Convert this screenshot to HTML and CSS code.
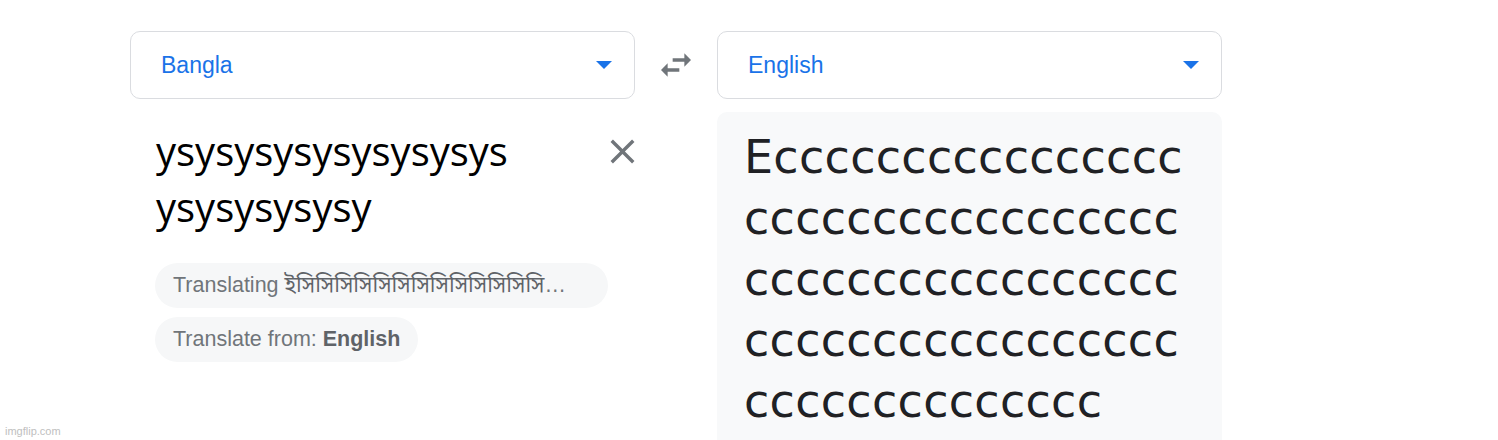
FILE: index.html
```html
<!DOCTYPE html>
<html lang="en">
<head>
    <meta charset="UTF-8">
    <meta name="viewport" content="width=device-width, initial-scale=1.0">
    <title>Translate</title>
    <link rel="stylesheet" href="styles.css">
</head>
<body>
    <div class="translator">
        <div class="lang-row">
            <div class="lang-select">
                <span class="lang-name">Bangla</span>
                <span class="caret"></span>
            </div>
            <button class="swap" type="button" aria-label="Swap languages">
                <svg width="40" height="40" viewBox="0 0 24 24"><path d="M6.99 11L3 15l3.99 4v-3H14v-2H6.99v-3zM21 9l-3.99-4v3H10v2h7.01v3L21 9z" fill="#70757a"/></svg>
            </button>
            <div class="lang-select">
                <span class="lang-name">English</span>
                <span class="caret"></span>
            </div>
        </div>

        <div class="panels">
            <div class="source">
                <div class="source-top">
                    <div class="source-text">ysysysysysysysysys ysysysysysy</div>
                    <button class="clear" type="button" aria-label="Clear source text">
                        <svg width="41" height="41" viewBox="0 0 24 24"><path d="M19 6.41L17.59 5 12 10.59 6.41 5 5 6.41 10.59 12 5 17.59 6.41 19 12 13.41 17.59 19 19 17.59 13.41 12z" fill="#70757a"/></svg>
                    </button>
                </div>
                <div class="chips">
                    <div class="chip chip-long" title="Translating">Translating <span class="native">ইসিসিসিসিসিসিসিসিসিসিসিসিসিসিসিসিসিসিসিসিসি</span></div>
                    <div class="chip">Translate from:&nbsp;<b>English</b></div>
                </div>
            </div>
            <div class="target">
                <div class="target-text">Eccccccccccccccccccccccccccccccccccccccccccccccccccccccccccccccccccccccccccccccccc</div>
            </div>
        </div>
    </div>
    <div class="watermark">imgflip.com</div>
</body>
</html>
```

FILE: styles.css
```css
body {
    margin: 0;
    background-color: #ffffff;
    font-family: "Liberation Sans", Arial, sans-serif;
    height: 440px;
    overflow: hidden;
    position: relative;
}
.translator {
    width: 1093px;
    padding: 31px 0 0 130px;
}
.lang-row {
    display: grid;
    grid-template-columns: 505px 82px 505px;
    align-items: center;
}
.lang-select {
    height: 68px;
    box-sizing: border-box;
    border: 1px solid #dadce0;
    border-radius: 10px;
    display: flex;
    align-items: center;
    justify-content: space-between;
    padding: 0 22px 0 30px;
}
.lang-name {
    color: #1a73e8;
    font-size: 23px;
}
.caret {
    width: 0;
    height: 0;
    border-left: 8px solid transparent;
    border-right: 8px solid transparent;
    border-top: 8px solid #1a73e8;
}
.swap, .clear {
    background: none;
    border: none;
    padding: 0;
    cursor: pointer;
    display: flex;
    justify-content: center;
}
.panels {
    display: grid;
    grid-template-columns: 505px 505px;
    column-gap: 82px;
    margin-top: 13px;
}
.source {
    padding: 11px 0 0 26px;
}
.source-top {
    display: flex;
    justify-content: space-between;
    align-items: flex-start;
}
.source-text {
    font-family: "Open Sans", sans-serif;
    font-size: 40px;
    line-height: 56px;
    color: #000000;
    width: 420px;
}
.clear {
    margin: 8px -8px 0 0;
}
.chips {
    margin: 28px 0 0 -1px;
    display: flex;
    flex-direction: column;
    align-items: flex-start;
    gap: 9px;
}
.chip {
    height: 45px;
    line-height: 45px;
    box-sizing: border-box;
    padding: 0 18px;
    border-radius: 23px;
    background-color: #f6f7f8;
    color: #70757a;
    font-size: 21.5px;
    white-space: nowrap;
}
.chip b {
    color: #5f6368;
}
.chip-long {
    width: 453px;
    padding-right: 28px;
    overflow: hidden;
    text-overflow: ellipsis;
}
.native {
    color: #5f6368;
    font-family: "Noto Sans Bengali", "Lohit Bengali", "FreeSans", sans-serif;
}
.target {
    background-color: #f8f9fa;
    border-radius: 10px 10px 0 0;
    height: 340px;
    padding: 15px 0 0 27px;
}
.target-text {
    font-family: "DejaVu Sans", sans-serif;
    font-size: 46px;
    line-height: 61px;
    letter-spacing: 0.3px;
    color: #202124;
    width: 445px;
    word-break: break-all;
}
.watermark {
    position: absolute;
    left: 5px;
    bottom: 3px;
    font-size: 11px;
    color: #c0c0c0;
}
```
